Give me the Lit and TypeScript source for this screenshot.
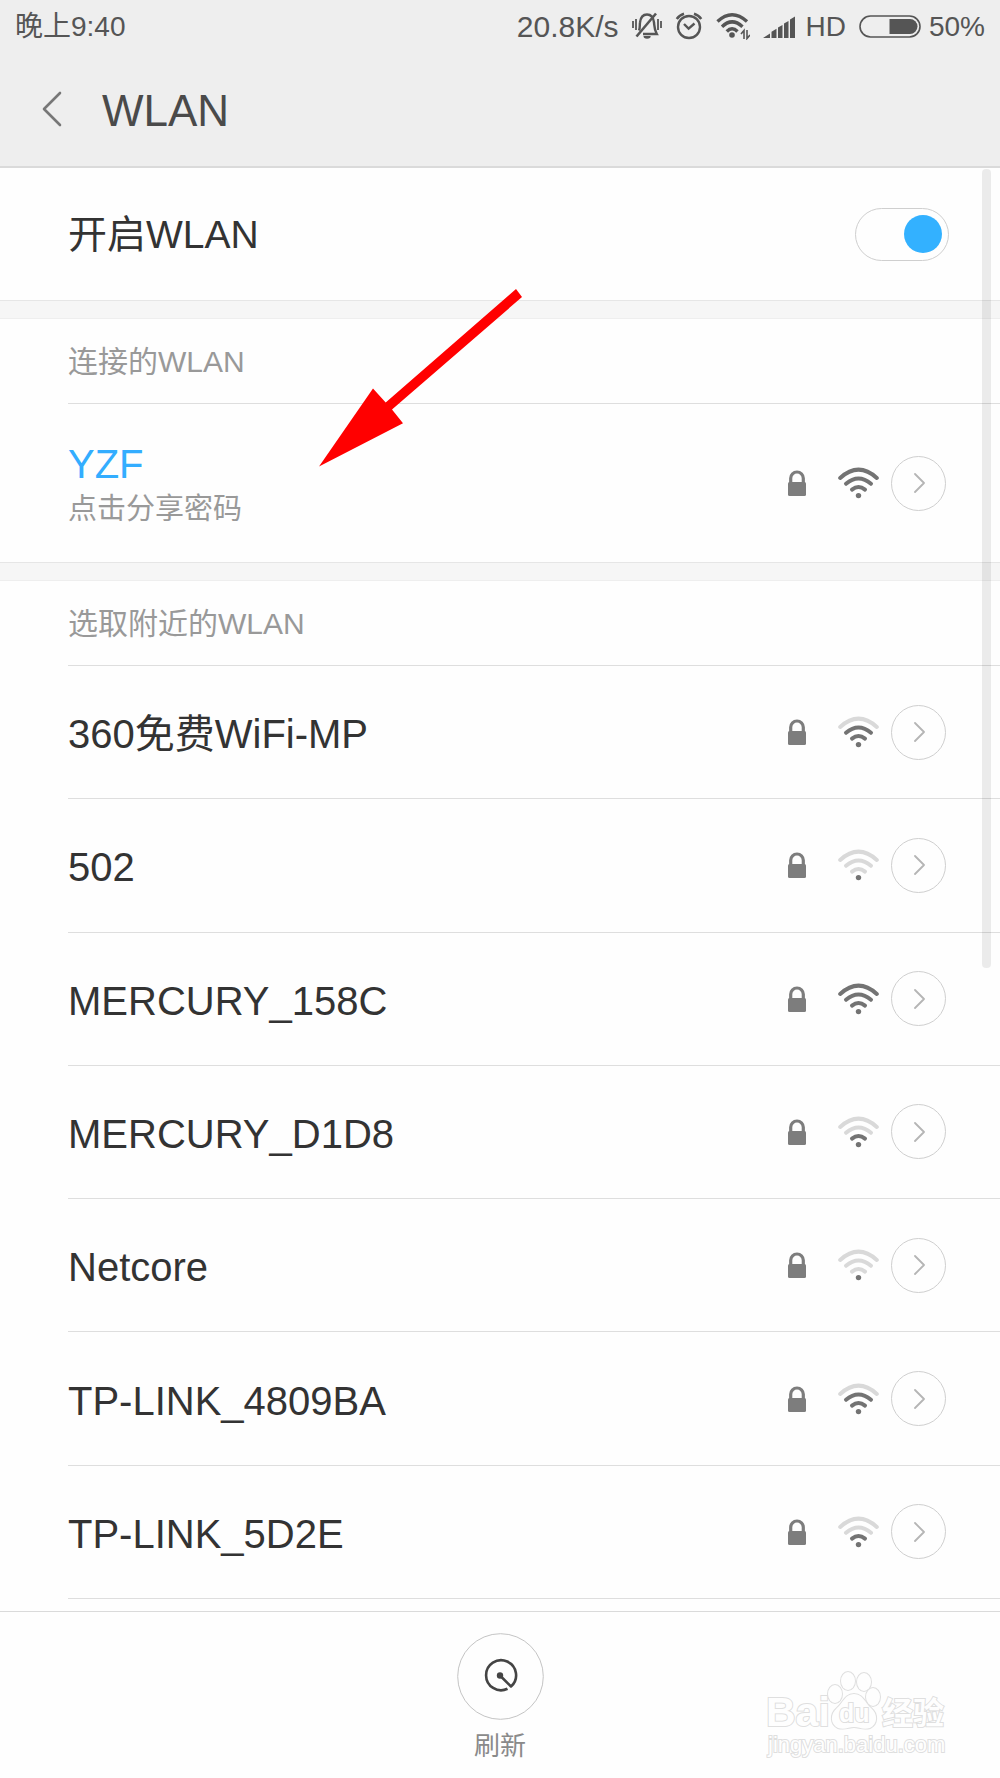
import { LitElement, html, css, svg } from "lit";
import { customElement, property, state } from "lit/decorators.js";

interface Network {
  name: string;
  bars: number;
  note?: string;
}

const CONNECTED: Network = { name: "YZF", bars: 3, note: "点击分享密码" };

const NEARBY: Network[] = [
  { name: "360免费WiFi-MP", bars: 2 },
  { name: "502", bars: 0 },
  { name: "MERCURY_158C", bars: 3 },
  { name: "MERCURY_D1D8", bars: 1 },
  { name: "Netcore", bars: 0 },
  { name: "TP-LINK_4809BA", bars: 2 },
  { name: "TP-LINK_5D2E", bars: 1 },
];

const ARCS = [
  "M14 22.6 Q20.5 17.4 27 22.6",
  "M8 16.8 Q20.5 6.2 33 16.8",
  "M2.2 11 Q20.5 -5.6 38.8 11",
];

/** Wi-Fi strength: a dot and three arcs, the reached ones dark. */
@customElement("signal-icon")
export class SignalIcon extends LitElement {
  static styles = css`
    :host {
      display: block;
    }
    .icon {
      display: block;
    }
    .arc {
      fill: none;
      stroke: #d9d9d9;
      stroke-width: 4;
      stroke-linecap: round;
    }
    .arc.on {
      stroke: #737373;
    }
    .dot {
      fill: #737373;
    }
  `;

  @property({ type: Number }) bars = 0;

  render() {
    return html`<svg class="icon" width="41" height="32" viewBox="0 0 41 32" aria-hidden="true">
      ${ARCS.map((d, i) => svg`<path class=${i < this.bars ? "arc on" : "arc"} d=${d} />`)}
      <circle class="dot" cx="20.5" cy="28.6" r="2.7" />
    </svg>`;
  }
}

/** One network: its name, lock, strength and details button. */
@customElement("network-row")
export class NetworkRow extends LitElement {
  static styles = css`
    :host {
      display: flex;
      align-items: center;
      gap: 12px;
      padding-right: 54px;
    }
    button {
      font: inherit;
      color: inherit;
      background: none;
      border: 0;
      padding: 0;
      cursor: pointer;
    }
    .connect {
      flex: 1;
      align-self: stretch;
      display: flex;
      flex-direction: column;
      justify-content: center;
      align-items: flex-start;
      padding-top: 4px;
      text-align: left;
    }
    .name {
      font-size: 40px;
      line-height: 48px;
      color: #333;
    }
    .name.active {
      color: #33adff;
    }
    .note {
      font-size: 29px;
      line-height: 42px;
      color: #999;
    }
    .lock {
      margin-right: 20px;
    }
    .details {
      display: flex;
      align-items: center;
      justify-content: center;
      width: 55px;
      height: 55px;
      border: 1px solid #cfcfcf;
      border-radius: 50%;
    }
  `;

  @property({ attribute: false }) network!: Network;

  render() {
    const { name, bars, note } = this.network;
    return html`
      <button class="connect" type="button">
        <span class=${note ? "name active" : "name"}>${name}</span>
        ${note ? html`<span class="note">${note}</span>` : null}
      </button>
      <svg class="lock" width="18" height="26" viewBox="0 0 18 26" aria-hidden="true">
        <path d="M2.7 13V8.3a6.3 6.3 0 0 1 12.6 0V13" fill="none" stroke="#7d7d7d" stroke-width="3.2" />
        <rect y="12" width="18" height="14" rx="1.5" fill="#7d7d7d" />
      </svg>
      <signal-icon .bars=${bars}></signal-icon>
      <button class="details" type="button" aria-label="${name} 详情">
        <svg width="12" height="20" viewBox="0 0 12 20" aria-hidden="true">
          <path
            d="M2 1l9 9L2 19"
            fill="none"
            stroke="#b5b5b5"
            stroke-width="1.8"
            stroke-linecap="round"
            stroke-linejoin="round"
          />
        </svg>
      </button>
    `;
  }
}

@customElement("status-bar")
export class StatusBar extends LitElement {
  static styles = css`
    :host {
      display: flex;
      align-items: center;
      justify-content: space-between;
      height: 52px;
      padding: 0 15px;
      font-size: 28px;
      line-height: 32px;
      color: #555;
    }
    .clock,
    .speed {
      padding-top: 2px;
    }
    .speed {
      font-size: 30px;
    }
    .tray {
      display: flex;
      align-items: center;
      gap: 13px;
    }
    .battery,
    .level {
      display: flex;
      align-items: center;
      gap: 8px;
      padding-top: 2px;
    }
    .level {
      gap: 10px;
    }
  `;

  render() {
    return html`
      <span class="clock">晚上9:40</span>
      <div class="tray">
        <span class="speed">20.8K/s</span>
        <svg width="30" height="28" viewBox="0 0 30 28" fill="none" stroke="#555" aria-hidden="true">
          <path d="M7 18.5C8.2 16 7.600 13 8 10.500C8.600 5.500 11.400 2.500 15 2.500S21.400 5.500 22 10.500C22.400 14 22.200 17.500 24.800 22H11" stroke-width="2.400" />
          <path d="M4.500 24.500L24 1.500" stroke-width="2.600" />
          <path d="M11.500 24a3.600 2.800 0 0 0 7.200 0z" fill="#555" stroke="none" />
          <path d="M1 9v7M4 7v11M26 7v11M29 9v7" stroke-width="1.800" />
        </svg>
        <svg width="28" height="28" viewBox="0 0 28 28" fill="none" stroke="#555" aria-hidden="true">
          <circle cx="14" cy="15" r="11" stroke-width="2.400" />
          <path d="M9 12l4.600 4.600L19.500 11.500" stroke-width="2.400" />
          <path d="M1.800 7A13 13 0 0 1 9 1.800M26.200 7A13 13 0 0 0 19 1.800" stroke-width="2.600" />
        </svg>
        <svg width="34" height="28" viewBox="0 0 34 28" fill="none" stroke="#555" aria-hidden="true">
          <path d="M1.500 9.500Q16 -4 31 9.500M6 14.800Q16 5 26.500 14.800M10.800 19.500Q16 14 21.500 19.500" stroke-width="3.400" />
          <circle cx="16" cy="23" r="2.800" fill="#555" stroke="none" />
          <path d="M28 27v-8.500l-3 3.500M31 18v8.500l3 -3.500" stroke-width="1.600" />
        </svg>
        <div class="level">
          <svg width="33" height="22" viewBox="0 0 33 22" fill="#555" aria-hidden="true">
            <path d="M0 22l7-4.500V22zM8.500 22v-6.300l5-3V22zM15 22V11.500l4.500-2.500v13zM21 22V7.500l4.500-2.500v17zM27 22V3.500L32 .500V22z" />
          </svg>
          <span>HD</span>
        </div>
        <div class="battery">
          <svg width="62" height="24" viewBox="0 0 62 24" aria-hidden="true">
            <rect x="1" y="1" width="60" height="21" rx="10.500" fill="none" stroke="#555" stroke-width="1.600" />
            <path d="M30.500 4H51a7.500 7.500 0 0 1 0 15H30.500z" fill="#555" />
          </svg>
          <span>50%</span>
        </div>
      </div>
    `;
  }
}

@customElement("app-root")
export class AppRoot extends LitElement {
  static styles = css`
    :host {
      position: relative;
      display: flex;
      flex-direction: column;
      box-sizing: border-box;
      min-height: 100vh;
      background: #fefefe;
      color: #333;
      font-family: "Liberation Sans", "Noto Sans CJK SC", sans-serif;
    }
    .top {
      background: #eee;
      border-bottom: 2px solid #dadada;
    }
    .title-bar {
      display: flex;
      align-items: center;
      gap: 40px;
      height: 114px;
      padding: 4px 40px 0;
      box-sizing: border-box;
    }
    button {
      font: inherit;
      background: none;
      border: 0;
      padding: 0;
      cursor: pointer;
    }
    h1,
    h2,
    ul {
      margin: 0;
      padding: 0;
      font-weight: 400;
      list-style: none;
    }
    h1 {
      font-size: 44px;
      line-height: 52px;
      color: #4a4a4a;
    }
    .content {
      position: relative;
      flex: 1;
      display: flex;
      flex-direction: column;
    }
    .power {
      display: flex;
      align-items: center;
      justify-content: space-between;
      height: 132px;
      padding: 0 51px 0 68px;
      font-size: 39px;
      line-height: 48px;
    }
    .power label {
      padding-top: 2px;
    }
    .switch {
      appearance: none;
      display: flex;
      align-items: center;
      width: 94px;
      height: 53px;
      margin: 0;
      padding: 0 6px;
      box-sizing: border-box;
      border: 1px solid #cfcfcf;
      border-radius: 27px;
      cursor: pointer;
    }
    .switch::before {
      content: "";
      width: 38px;
      height: 38px;
      border-radius: 50%;
      background: #ccc;
    }
    .switch:checked {
      justify-content: flex-end;
    }
    .switch:checked::before {
      background: #33b1ff;
    }
    .band {
      height: 17px;
      background: #f6f6f6;
      border-top: 1px solid #e6e6e6;
      border-bottom: 1px solid #eee;
    }
    h2 {
      display: flex;
      align-items: center;
      height: 85px;
      margin-left: 68px;
      padding-top: 2px;
      box-sizing: border-box;
      border-bottom: 1px solid #dedede;
      font-size: 30px;
      line-height: 40px;
      color: #999;
    }
    .connected {
      min-height: 158px;
      margin-left: 68px;
    }
    .nearby {
      flex: 1;
      display: flex;
      flex-direction: column;
      padding-bottom: 12px;
      margin-left: 68px;
    }
    .item {
      flex: 1;
      display: flex;
      min-height: 100px;
      border-bottom: 1px solid #dedede;
    }
    .item network-row {
      flex: 1;
    }
    .scrollbar {
      position: absolute;
      top: 1px;
      right: 9px;
      width: 9px;
      height: 799px;
      border-radius: 4px;
      background: rgba(0, 0, 0, 0.075);
    }
    .bottom {
      display: flex;
      justify-content: center;
      padding: 21px 0 14px;
      border-top: 1px solid #dadada;
    }
    .refresh {
      display: flex;
      flex-direction: column;
      align-items: center;
      gap: 8px;
      font-size: 26px;
      line-height: 36px;
      color: #8a8a8a;
    }
    .arrow {
      position: absolute;
      top: 289px;
      left: 319px;
      pointer-events: none;
    }
    .watermark {
      position: absolute;
      right: 50px;
      bottom: 16px;
      pointer-events: none;
    }
    .outlined {
      fill: #fefefe;
      stroke: #dfdfdf;
      stroke-width: 2;
      paint-order: stroke;
    }
    .brand {
      font-size: 41px;
      font-weight: 700;
    }
    .inner {
      font-size: 25px;
      font-weight: 700;
    }
    .cjk {
      font-size: 31px;
      font-weight: 700;
    }
    .site {
      font-size: 22px;
    }
  `;

  @state() private enabled = true;

  render() {
    return html`
      <header class="top">
        <status-bar></status-bar>
        <div class="title-bar">
          <button type="button" aria-label="返回">
            <svg width="22" height="36" viewBox="0 0 22 36" aria-hidden="true">
              <path
                d="M20 2L4 18l16 16"
                fill="none"
                stroke="#777"
                stroke-width="2.6"
                stroke-linecap="round"
                stroke-linejoin="round"
              />
            </svg>
          </button>
          <h1>WLAN</h1>
        </div>
      </header>

      <main class="content">
        <div class="power">
          <label for="power">开启WLAN</label>
          <input
            id="power"
            class="switch"
            type="checkbox"
            role="switch"
            .checked=${this.enabled}
            @change=${(e: Event) => (this.enabled = (e.target as HTMLInputElement).checked)}
          />
        </div>
        <div class="band"></div>
        <h2>连接的WLAN</h2>
        <network-row class="connected" .network=${CONNECTED}></network-row>
        <div class="band"></div>
        <h2>选取附近的WLAN</h2>
        <ul class="nearby">
          ${NEARBY.map(
            (n) => html`<li class="item"><network-row .network=${n}></network-row></li>`
          )}
        </ul>
        <div class="scrollbar"></div>
      </main>

      <footer class="bottom">
        <button class="refresh" type="button">
          <svg width="87" height="87" viewBox="0 0 87 87" aria-hidden="true">
            <circle cx="43.5" cy="43.5" r="42.8" fill="none" stroke="#c4c4c4" />
            <path
              d="M43 42.500L54 53.500A15 15 0 1 0 50.500 55.800"
              fill="none"
              stroke="#444"
              stroke-width="2.600"
              stroke-linejoin="round"
            />
            <circle cx="43" cy="42.5" r="3.2" fill="#444" />
          </svg>
          <span>刷新</span>
        </button>
      </footer>

      <svg class="arrow" width="204" height="178" viewBox="0 0 204 178" aria-hidden="true">
        <path d="M197 0L203 8L73 120.500L84 134.300L0 177.500L54 99.500L66.700 113.500z" fill="#f00" />
      </svg>

      <svg class="watermark" width="184" height="94" viewBox="0 0 184 94" aria-hidden="true">
        <g class="outlined">
          <text class="brand" x="0" y="58">Bai</text>
          <ellipse cx="69" cy="26" rx="7" ry="9" />
          <ellipse cx="82" cy="13" rx="7" ry="9" />
          <ellipse cx="98" cy="14" rx="7" ry="9" />
          <ellipse cx="107" cy="29" rx="7" ry="9" />
          <path d="M88 26C97 26 99 35 105 40C112 46 112 56 104 60C97 62 93 59 88 59S79 62 72 60C64 56 64 46 71 40C77 35 79 26 88 26z" />
          <text class="inner" x="73" y="54">du</text>
          <text class="cjk" x="116" y="56">经验</text>
          <text class="site" x="2" y="84">jingyan.baidu.com</text>
        </g>
      </svg>
    `;
  }
}
